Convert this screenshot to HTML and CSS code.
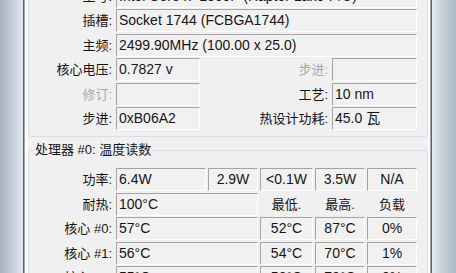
FILE: index.html
```html
<!DOCTYPE html>
<html lang="zh-CN">
  <head>
    <meta charset="UTF-8" />
    <title>Core Temp</title>
    <link rel="stylesheet" href="styles.css">
  </head>
  <body>
    <div class="frame-l"></div>
    <div class="client">
      <div class="group top-group">
        <div class="info">
          <div class="lbl">型号:</div>
          <div class="val wide">Intel Core i7-1360P (Raptor Lake-P/U)</div>

          <div class="lbl">插槽:</div>
          <div class="val wide">Socket 1744 (FCBGA1744)</div>

          <div class="lbl">主频:</div>
          <div class="val wide">2499.90MHz (100.00 x 25.0)</div>

          <div class="lbl">核心电压:</div>
          <div class="val">0.7827 v</div>
          <div class="lbl dim">步进:</div>
          <div class="val"></div>

          <div class="lbl dim">修订:</div>
          <div class="val"></div>
          <div class="lbl">工艺:</div>
          <div class="val">10 nm</div>

          <div class="lbl">步进:</div>
          <div class="val">0xB06A2</div>
          <div class="lbl">热设计功耗:</div>
          <div class="val">45.0 瓦</div>
        </div>
      </div>

      <fieldset class="group temps">
        <legend>处理器 #0: 温度读数</legend>
        <div class="readings">
          <div class="lbl">功率:</div>
          <div class="val">6.4W</div>
          <div class="val c">2.9W</div>
          <div class="val c">&lt;0.1W</div>
          <div class="val c">3.5W</div>
          <div class="val c">N/A</div>

          <div class="lbl">耐热:</div>
          <div class="val span2">100°C</div>
          <div class="head">最低.</div>
          <div class="head">最高.</div>
          <div class="head">负载</div>

          <div class="lbl">核心 #0:</div>
          <div class="val span2">57°C</div>
          <div class="val c">52°C</div>
          <div class="val c">87°C</div>
          <div class="val c">0%</div>

          <div class="lbl">核心 #1:</div>
          <div class="val span2">56°C</div>
          <div class="val c">54°C</div>
          <div class="val c">70°C</div>
          <div class="val c">1%</div>

          <div class="lbl">核心 #2:</div>
          <div class="val span2">55°C</div>
          <div class="val c">53°C</div>
          <div class="val c">79°C</div>
          <div class="val c">0%</div>
        </div>
      </fieldset>
    </div>
    <div class="frame-r"></div>
  </body>
</html>
```

FILE: styles.css
```css
body {
  margin: 0;
  width: 456px;
  height: 273px;
  overflow: hidden;
  display: flex;
  background-color: #f0f0f0;
  font-family: 'Liberation Sans', 'Noto Sans CJK SC', sans-serif;
  color: #151515;
}

.frame-l {
  width: 23px;
  flex: none;
  background: linear-gradient(to right, #a5b2c0, #c9d3dd 60%, #e2e7ec);
}

.frame-r {
  width: 24px;
  flex: none;
  background: linear-gradient(to right, #e4e9ee, #cbd4dd 35%, #adb9c5);
}

.client {
  flex: 1;
  min-width: 0;
  border-left: 1px solid #56626e;
  border-right: 1px solid #56626e;
  box-shadow: inset 1px 0 #9ea9b4, inset 4px 0 #fbfbfb, inset -1px 0 #9ea9b4,
    inset -3px 0 #fbfbfb;
  background-color: #f0f0f0;
  padding: 0 3px 0 4px;
}

.group {
  border: 1px solid #d5dfe5;
  border-radius: 3px;
}

.top-group {
  margin-top: -22px;
  padding: 5.5px 10px 6px 0;
}

.info {
  display: grid;
  grid-template-columns: 85px 84px 128px 85px;
  grid-auto-rows: 23px;
  column-gap: 2px;
  row-gap: 1.5px;
}

.readings {
  display: grid;
  grid-template-columns: 85px 90px 50px 53px 50px 50px;
  grid-auto-rows: 23px;
  column-gap: 2px;
  row-gap: 1.5px;
}

.lbl {
  text-align: right;
  padding-right: 2px;
  font-size: 13px;
  line-height: 23px;
  white-space: nowrap;
}

.lbl.dim {
  color: #a8a8a8;
}

.head {
  text-align: center;
  font-size: 13px;
  line-height: 23px;
}

.val {
  border: 1px solid;
  border-color: #a3a3a3 #ffffff #ffffff #a3a3a3;
  background-color: #f1f1f1;
  padding-left: 2px;
  font-size: 14px;
  line-height: 21px;
  white-space: nowrap;
  overflow: hidden;
}

.val.wide {
  grid-column: span 3;
}

.val.span2 {
  grid-column: span 2;
}

.val.c {
  text-align: center;
  padding-left: 0;
}

.temps {
  margin: 5px 0 0;
  padding: 10px 10px 0 0;
  min-width: 0;
}

.temps legend {
  margin-left: 4px;
  padding: 0 2px;
  font-size: 13px;
  line-height: 16px;
}
```
